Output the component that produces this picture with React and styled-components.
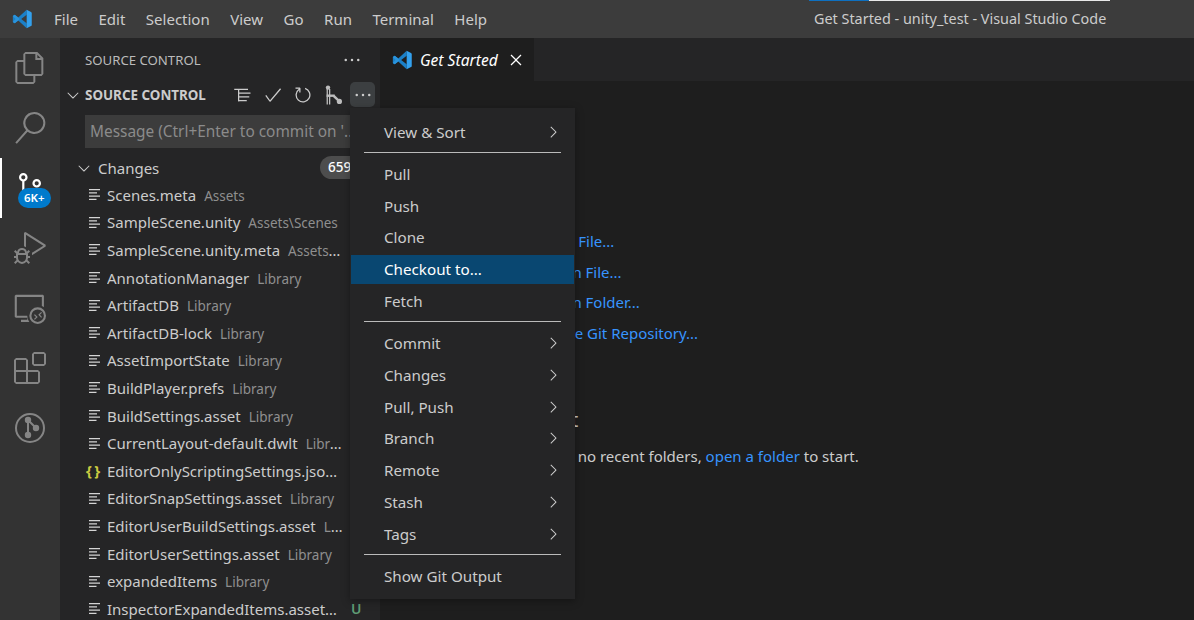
import React from 'react';
import styled, { createGlobalStyle } from 'styled-components';
import {
  VscFiles, VscSearch, VscExtensions, VscEllipsis, VscChevronDown, VscChevronRight,
  VscClose, VscCheck, VscRefresh, VscDebugAlt, VscRemoteExplorer, VscListTree,
} from 'react-icons/vsc';

const GlobalStyle = createGlobalStyle`
  html, body {
    margin: 0;
    height: 100%;
    overflow: hidden;
    background: #1e1e1e;
    font-family: "Noto Sans", "Open Sans", sans-serif;
  }
  * { box-sizing: border-box; }
`;

const Page = styled.div`
  position: relative;
  width: 1194px;
  height: 620px;
  display: flex;
  flex-direction: column;
  overflow: hidden;
`;

const TitleBar = styled.div`
  position: relative;
  height: 38px;
  flex: none;
  background: #3c3c3c;
  display: flex;
  align-items: center;
  padding-left: 12px;
`;

const Progress = styled.div`
  position: absolute;
  top: 0;
  left: 809px;
  width: 301px;
  height: 1px;
  background: linear-gradient(to right, #0e70c0 60px, #e8e8e8 60px);
`;

const MenuBar = styled.div`
  display: flex;
  margin-left: 22px;
  gap: 20.5px;
`;

const MenuLabel = styled.span`
  font-size: 15px;
  color: #cccccc;
`;

const WindowTitle = styled.div`
  position: absolute;
  left: 814px;
  top: 9px;
  font-size: 14.4px;
  color: #cccccc;
  white-space: nowrap;
`;

const Body = styled.div`
  flex: 1;
  display: flex;
  min-height: 0;
`;

const ActivityBar = styled.div`
  width: 60px;
  flex: none;
  background: #333333;
  display: flex;
  flex-direction: column;
`;

const ActivityItem = styled.div`
  position: relative;
  height: 60px;
  display: flex;
  align-items: center;
  justify-content: center;
  color: ${p => p.active ? '#ffffff' : '#858585'};
  border-left: 2px solid ${p => p.active ? '#ffffff' : 'transparent'};
  padding-right: 2px;
`;

const Badge = styled.span`
  position: absolute;
  left: 16px;
  top: 30px;
  height: 20px;
  padding: 0 6px;
  border-radius: 10px;
  background: #007acc;
  color: #fff;
  font-size: 11.5px;
  font-weight: 600;
  line-height: 20px;
  white-space: nowrap;
`;

const SideBar = styled.div`
  width: 320px;
  flex: none;
  background: #252526;
  display: flex;
  flex-direction: column;
  overflow: hidden;
`;

const SideHeader = styled.div`
  height: 44px;
  flex: none;
  display: flex;
  align-items: center;
  justify-content: space-between;
  padding: 0 18px 0 25px;
  font-size: 13.2px;
  color: #bbbbbb;
`;

const SectionHeader = styled.div`
  height: 25px;
  flex: none;
  display: flex;
  align-items: center;
  color: #cccccc;
  padding-left: 4px;
`;

const SectionTitle = styled.span`
  font-size: 13.4px;
  font-weight: 700;
  margin-left: 3px;
  color: #cccccc;
`;

const Toolbar = styled.div`
  margin-left: auto;
  display: flex;
  margin-right: 5px;
  gap: 5px;
`;

const ToolButton = styled.div`
  width: 25px;
  height: 25px;
  border-radius: 5px;
  display: flex;
  align-items: center;
  justify-content: center;
  background: ${p => p.active ? '#3c3f41' : 'transparent'};
  color: #cccccc;
`;

const MessageBox = styled.div`
  height: 33px;
  flex: none;
  margin: 8px 5px 0 25px;
  background: #3c3c3c;
  color: #8b8b8b;
  font-size: 15.4px;
  line-height: 33px;
  padding-left: 5px;
  white-space: nowrap;
  overflow: hidden;
`;

const ChangesRow = styled.div`
  height: 27px;
  flex: none;
  margin-top: 6px;
  display: flex;
  align-items: center;
  padding-left: 15px;
  color: #cccccc;
  font-size: 15px;
`;

const ChangesLabel = styled.span`
  margin-left: 5px;
`;

const CountBadge = styled.span`
  margin-left: auto;
  margin-right: 5px;
  margin-bottom: 1px;
  height: 23px;
  width: 55px;
  padding-left: 8px;
  border-radius: 12px;
  background: #4d4d4d;
  color: #fff;
  font-size: 13.5px;
  font-weight: 500;
  line-height: 23px;
`;

const FileList = styled.div`
  flex: 1;
  min-height: 0;
`;

const FileRow = styled.div`
  height: 27.6px;
  display: flex;
  align-items: center;
  padding-left: 25px;
`;

const IconSlot = styled.div`
  width: 22px;
  flex: none;
  display: flex;
  align-items: center;
`;

const LinesIcon = styled.svg`
  margin-left: 4px;
`;

const JsonGlyph = styled.span`
  color: #cbcb41;
  font-size: 15px;
  font-weight: 700;
  letter-spacing: -0.8px;
  margin-left: 1px;
  margin-top: -2px;
`;

const FileLabel = styled.div`
  width: ${p => p.short ? 231 : 236}px;
  flex: none;
  overflow: hidden;
  white-space: nowrap;
  text-overflow: ellipsis;
  font-size: 15px;
  color: #cccccc;
`;

const FileDesc = styled.span`
  margin-left: 8px;
  font-size: 13.5px;
  color: #8f8f8f;
`;

const StatusLetter = styled.span`
  margin-left: 13px;
  color: #5f9c74;
  font-size: 14px;
  font-weight: 600;
`;

const Editor = styled.div`
  flex: 1;
  min-width: 0;
  display: flex;
  flex-direction: column;
  background: #1e1e1e;
`;

const TabStrip = styled.div`
  height: 43px;
  flex: none;
  background: #252526;
  display: flex;
`;

const Tab = styled.div`
  width: 154px;
  background: #1e1e1e;
  display: flex;
  align-items: center;
  padding-left: 12px;
  color: #ffffff;
`;

const TabTitle = styled.span`
  margin-left: 8px;
  font-size: 15.6px;
  font-style: italic;
`;

const TabClose = styled.span`
  margin-left: 8px;
  display: flex;
`;

const Welcome = styled.div`
  flex: 1;
  padding: 145px 0 0 130px;
  display: flex;
  flex-direction: column;
`;

const LinkRow = styled.div`
  height: 30.5px;
  display: flex;
  align-items: center;
  padding-left: 33px;
`;

const WelcomeLink = styled.a`
  color: #3794ff;
  font-size: 15px;
`;

const Heading = styled.div`
  margin-top: 57px;
  margin-left: 4px;
  font-size: 20px;
  color: #cccccc;
  line-height: 30px;
`;

const RecentText = styled.div`
  margin-top: 11px;
  font-size: 15px;
  color: #cccccc;
`;

const Menu = styled.div`
  position: absolute;
  left: 350px;
  top: 108px;
  width: 225px;
  height: 491px;
  padding-top: 8px;
  display: flex;
  flex-direction: column;
  background: #252526;
  box-shadow: 0 2px 8px rgba(0, 0, 0, 0.36);
  color: #cccccc;
`;

const MenuItem = styled.div`
  height: 29px;
  flex: none;
  margin: 1.4px 1px;
  padding: 0 12px 0 33px;
  display: flex;
  align-items: center;
  justify-content: space-between;
  font-size: 15.2px;
  background: ${p => p.active ? '#094771' : 'transparent'};
  color: ${p => p.active ? '#ffffff' : '#cccccc'};
`;

const MenuSep = styled.div`
  height: 1px;
  flex: none;
  margin: 4.6px 14px;
  background: #bbbbbb;
`;

function FileLines() {
  return (
    <LinesIcon width="12" height="11" viewBox="0 0 12 11" fill="none" stroke="#d4d4d4" strokeWidth="1.2">
      <path d="M0 .6h11M0 3.9h8M0 7.2h11M0 10.4h7.5" />
    </LinesIcon>
  );
}

function VsLogo({ size }) {
  return (
    <svg width={size} height={size} viewBox="0 0 24 24">
      <path fill="#1b80c8" d="M17.6 1v5.9L11 12l6.6 5.1V23L7.5 13.7 3.3 17l-1.5-.8L1 15.5V8.5l.8-.7L3.3 7l4.2 3.3z" />
      <path fill="#2a93dc" d="M3.3 7l4.2 3.3 1.8 1.7-1.8 1.7L3.3 17l-1.5-.8L1 15.5l3.3-3.5L1 8.5l.8-.7z" />
      <path fill="#33a1ee" d="M17.6 1l5.2 2.5c.5.3.9.8.9 1.4v14.2c0 .6-.3 1.1-.9 1.4L17.6 23z" />
    </svg>
  );
}

function ScmIcon() {
  return (
    <svg width="32" height="32" viewBox="0 0 32 32" fill="none" stroke="#fff" strokeWidth="2.2">
      <circle cx="9.3" cy="5.3" r="3.2" />
      <circle cx="22.7" cy="11.3" r="3.2" />
      <path d="M9.3 8.8V24" />
    </svg>
  );
}

function GitGraphIcon({ size }) {
  return (
    <svg width={size} height={size} viewBox="0 0 20 20" fill="#bdbdbd">
      <circle cx="5" cy="2.6" r="2.2" />
      <rect x="3.6" y="4" width="1.3" height="15.5" />
      <rect x="6" y="4" width="1.3" height="15.5" />
      <rect x="3.6" y="9.5" width="8" height="2.4" />
      <path d="M11 9.5l6 5.8-1.6 1.6-5.4-5z" />
      <circle cx="16.4" cy="16.4" r="2.6" />
    </svg>
  );
}

function GraphCircleIcon() {
  return (
    <svg width="32" height="32" viewBox="0 0 32 32" fill="none" stroke="#858585" strokeWidth="2">
      <circle cx="16" cy="16" r="14" />
      <path d="M14 8v15M14 8l8 8" />
      <circle cx="14" cy="8" r="2.2" fill="#858585" />
      <circle cx="14" cy="23" r="2.2" fill="#858585" />
      <circle cx="22" cy="16" r="2.2" fill="#858585" />
    </svg>
  );
}

const menus = ['File', 'Edit', 'Selection', 'View', 'Go', 'Run', 'Terminal', 'Help'];

const files = [
  ['Scenes.meta', 'Assets'],
  ['SampleScene.unity', 'Assets\\Scenes'],
  ['SampleScene.unity.meta', 'Assets\\Scenes'],
  ['AnnotationManager', 'Library'],
  ['ArtifactDB', 'Library'],
  ['ArtifactDB-lock', 'Library'],
  ['AssetImportState', 'Library'],
  ['BuildPlayer.prefs', 'Library'],
  ['BuildSettings.asset', 'Library'],
  ['CurrentLayout-default.dwlt', 'Library'],
  ['EditorOnlyScriptingSettings.json', 'Library', 'json'],
  ['EditorSnapSettings.asset', 'Library'],
  ['EditorUserBuildSettings.asset', 'Library'],
  ['EditorUserSettings.asset', 'Library'],
  ['expandedItems', 'Library'],
  ['InspectorExpandedItems.asset', 'Library', 'file', 'U'],
];

const menuGroups = [
  [['View & Sort', true]],
  [['Pull'], ['Push'], ['Clone'], ['Checkout to...', false, true], ['Fetch']],
  [['Commit', true], ['Changes', true], ['Pull, Push', true], ['Branch', true], ['Remote', true], ['Stash', true], ['Tags', true]],
  [['Show Git Output']],
];

export default function App() {
  return (
    <Page>
      <GlobalStyle />
      <TitleBar>
        <Progress />
        <VsLogo size={20} />
        <MenuBar>
          {menus.map(m => <MenuLabel key={m}>{m}</MenuLabel>)}
        </MenuBar>
        <WindowTitle>Get Started - unity_test - Visual Studio Code</WindowTitle>
      </TitleBar>
      <Body>
        <ActivityBar>
          <ActivityItem><VscFiles size={32} /></ActivityItem>
          <ActivityItem><VscSearch size={32} /></ActivityItem>
          <ActivityItem active><ScmIcon /><Badge>6K+</Badge></ActivityItem>
          <ActivityItem><VscDebugAlt size={32} /></ActivityItem>
          <ActivityItem><VscRemoteExplorer size={32} /></ActivityItem>
          <ActivityItem><VscExtensions size={32} /></ActivityItem>
          <ActivityItem><GraphCircleIcon /></ActivityItem>
        </ActivityBar>
        <SideBar>
          <SideHeader>
            <span>SOURCE CONTROL</span>
            <VscEllipsis size={20} color="#cccccc" />
          </SideHeader>
          <SectionHeader>
            <VscChevronDown size={18} />
            <SectionTitle>SOURCE CONTROL</SectionTitle>
            <Toolbar>
              <ToolButton><VscListTree size={20} /></ToolButton>
              <ToolButton><VscCheck size={20} /></ToolButton>
              <ToolButton><VscRefresh size={20} /></ToolButton>
              <ToolButton><GitGraphIcon size={20} /></ToolButton>
              <ToolButton active><VscEllipsis size={20} /></ToolButton>
            </Toolbar>
          </SectionHeader>
          <MessageBox>Message (Ctrl+Enter to commit on '...</MessageBox>
          <ChangesRow>
            <VscChevronDown size={18} />
            <ChangesLabel>Changes</ChangesLabel>
            <CountBadge>6590</CountBadge>
          </ChangesRow>
          <FileList>
            {files.map(([name, desc, kind, status]) => (
              <FileRow key={name}>
                <IconSlot>{kind === 'json' ? <JsonGlyph>{'{ }'}</JsonGlyph> : <FileLines />}</IconSlot>
                <FileLabel short={!!status}>
                  {name}
                  <FileDesc>{desc}</FileDesc>
                </FileLabel>
                {status && <StatusLetter>{status}</StatusLetter>}
              </FileRow>
            ))}
          </FileList>
        </SideBar>
        <Editor>
          <TabStrip>
            <Tab>
              <VsLogo size={20} />
              <TabTitle>Get Started</TabTitle>
              <TabClose><VscClose size={20} /></TabClose>
            </Tab>
          </TabStrip>
          <Welcome>
            <LinkRow><WelcomeLink>New File...</WelcomeLink></LinkRow>
            <LinkRow><WelcomeLink>Open File...</WelcomeLink></LinkRow>
            <LinkRow><WelcomeLink>Open Folder...</WelcomeLink></LinkRow>
            <LinkRow><WelcomeLink>Clone Git Repository...</WelcomeLink></LinkRow>
            <Heading>Recent</Heading>
            <RecentText>You have no recent folders, <WelcomeLink>open a folder</WelcomeLink> to start.</RecentText>
          </Welcome>
        </Editor>
      </Body>
      <Menu>
        {menuGroups.map((group, i) => (
          <React.Fragment key={i}>
            {i > 0 && <MenuSep />}
            {group.map(([label, sub, active]) => (
              <MenuItem key={label} active={active}>
                <span>{label}</span>
                {sub && <VscChevronRight size={18} />}
              </MenuItem>
            ))}
          </React.Fragment>
        ))}
      </Menu>
    </Page>
  );
}
